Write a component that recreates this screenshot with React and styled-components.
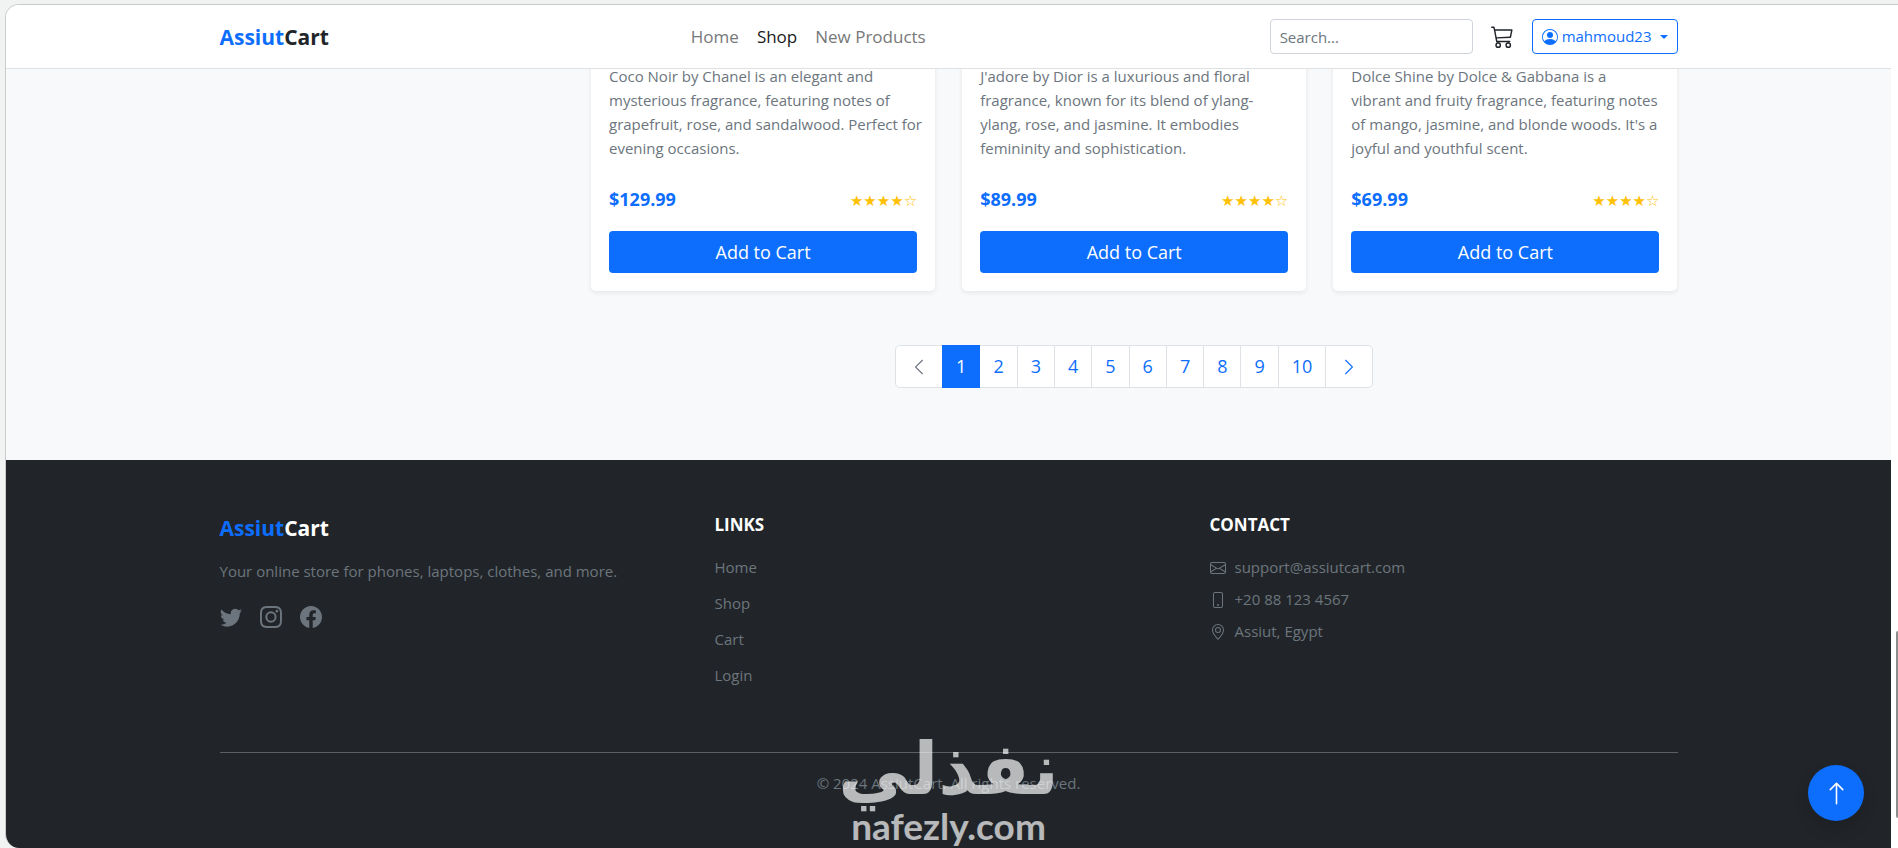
import styled, { createGlobalStyle, css } from "styled-components";
import { useState } from "react";
import {
  BsArrowUp,
  BsCart3,
  BsChevronLeft,
  BsChevronRight,
  BsEnvelope,
  BsFacebook,
  BsGeoAlt,
  BsInstagram,
  BsPersonCircle,
  BsPhone,
  BsTwitter,
} from "react-icons/bs";

const products = [
  {
    id: 1,
    text: "Coco Noir by Chanel is an elegant and mysterious fragrance, featuring notes of grapefruit, rose, and sandalwood. Perfect for evening occasions.",
    price: "$129.99",
    rating: 4,
  },
  {
    id: 2,
    text: "J'adore by Dior is a luxurious and floral fragrance, known for its blend of ylang-\nylang, rose, and jasmine. It embodies femininity and sophistication.",
    price: "$89.99",
    rating: 4,
  },
  {
    id: 3,
    text: "Dolce Shine by Dolce & Gabbana is a\nvibrant and fruity fragrance, featuring notes of mango, jasmine, and blonde woods. It's a joyful and youthful scent.",
    price: "$69.99",
    rating: 4,
  },
];

const pages = [1, 2, 3, 4, 5, 6, 7, 8, 9, 10];

const GlobalStyle = createGlobalStyle`
  * {
    box-sizing: border-box;
  }

  body {
    margin: 0;
    background-color: #f1f2f2;
    color: #212529;
    font-family: "Open Sans", "Noto Sans", sans-serif;
    font-size: 18px;
    line-height: 27px;
  }

  h2, h3, p, ul {
    margin: 0;
    padding: 0;
  }

  ul {
    list-style: none;
  }

  a {
    color: inherit;
    text-decoration: none;
  }

  button, input {
    font: inherit;
  }

  svg {
    display: block;
  }
`;

const Window = styled.div`
  display: flex;
  min-height: calc(100vh - 4px);
  margin: 4px 0 0 5px;
  border: solid #c8cacb;
  border-width: 1px 0 0 1px;
  border-radius: 14px 0 0 14px;
  background-color: #fff;
  overflow: hidden;
`;

const Page = styled.div`
  flex: 1;
  display: flex;
  flex-direction: column;
  background-color: #f8f9fa;
`;

const ScrollTrack = styled.div`
  display: flex;
  flex-direction: column;
  justify-content: flex-end;
  align-items: flex-end;
  width: 7px;
  padding-bottom: 30px;

  &::after {
    content: "";
    width: 2px;
    height: 187px;
    border-radius: 2px 0 0 2px;
    background-color: #8b8d8d;
  }
`;

const Container = styled.div`
  width: 100%;
  max-width: 1486px;
  margin: 0 auto;
  padding: 0 14px;
`;

const Header = styled.header`
  position: relative;
  z-index: 2;
  background-color: #fff;
  border-bottom: 1px solid #dee0e2;
`;

const NavRow = styled(Container)`
  display: flex;
  align-items: center;
  justify-content: space-between;
  height: 63px;
`;

const Brand = styled.a`
  margin-right: 18px;
  color: ${({ $light }) => ($light ? "#fff" : "#212529")};
  font-size: 21px;
  font-weight: 700;
  line-height: 28px;

  span {
    color: #0d6efd;
  }
`;

const NavLinks = styled.nav`
  display: flex;
`;

const NavLink = styled.a`
  padding: 0 9px;
  color: ${({ $active }) => ($active ? "#191a1b" : "#777879")};
  font-size: 17px;
`;

const NavActions = styled.div`
  display: flex;
  align-items: center;
  gap: 18px;
`;

const SearchInput = styled.input`
  width: 203px;
  height: 35px;
  padding: 0 9px;
  border: 1px solid #ced4da;
  border-radius: 4px;
  background-color: #fff;
  font-size: 15px;

  &::placeholder {
    color: #6c757d;
    opacity: 1;
  }
`;

const CartLink = styled.a`
  font-size: 23px;
`;

const UserButton = styled.button`
  display: flex;
  align-items: center;
  gap: 4px;
  height: 35px;
  padding: 0 9px;
  border: 1px solid #0d6efd;
  border-radius: 4px;
  background-color: transparent;
  color: #0d6efd;
  font-size: 15px;

  svg {
    font-size: 16px;
  }

  &::after {
    content: "";
    margin-left: 4px;
    border: solid transparent;
    border-width: 4px 4px 0;
    border-top-color: currentColor;
  }
`;

const Main = styled(Container)`
  display: flex;
  justify-content: flex-end;
  /* the list runs on under the nav bar */
  margin-top: -23px;
  padding-bottom: 72px;
`;

const Products = styled.section`
  width: calc(75% - 7px);
`;

const ProductGrid = styled.div`
  display: grid;
  grid-template-columns: repeat(3, 1fr);
  gap: 27px;
`;

const Card = styled.article`
  display: flex;
  flex-direction: column;
  padding: 18px;
  border-radius: 5px;
  background-color: #fff;
  box-shadow: 0 2px 5px rgba(0, 0, 0, 0.08);
`;

const CardText = styled.p`
  flex: 1;
  margin: 0 -8px 26px 0;
  color: #6c757d;
  font-size: 15px;
  line-height: 24px;
  white-space: pre-line;
`;

const CardRow = styled.div`
  display: flex;
  align-items: flex-end;
  justify-content: space-between;
  margin-bottom: 18px;
`;

const Price = styled.strong`
  color: #0d6efd;
`;

const Stars = styled.span`
  color: #ffc107;
  font-family: "DejaVu Sans", sans-serif;
  font-size: 15px;
  line-height: 24px;
`;

const AddButton = styled.button`
  height: 42px;
  border: 0;
  border-radius: 4px;
  background-color: #0d6efd;
  color: #fff;
`;

const Pagination = styled.nav`
  display: flex;
  justify-content: center;
  margin-top: 54px;
`;

const PageButton = styled.button`
  height: 43px;
  padding: 0 13px;
  border: 1px solid #dee2e6;
  background-color: #fff;
  color: #0d6efd;

  & + & {
    margin-left: -1px;
  }

  &:first-child {
    padding: 0 14px;
    border-radius: 5px 0 0 5px;
  }

  &:last-child {
    padding: 0 14px;
    border-radius: 0 5px 5px 0;
  }

  &:disabled {
    color: #6c757d;
  }

  ${({ $active }) =>
    $active &&
    css`
      position: relative;
      border-color: #0d6efd;
      background-color: #0d6efd;
      color: #fff;
    `}
`;

const Footer = styled.footer`
  position: relative;
  flex: 1;
  padding-top: 54px;
  background-color: #212529;
  color: #6c757d;
  font-size: 15px;
`;

const FooterColumns = styled.div`
  display: grid;
  grid-template-columns: repeat(3, 1fr);
  gap: 27px;
  padding-bottom: 63px;
`;

const FooterBrand = styled.div`
  p {
    margin: 14px 0 21px;
  }
`;

const Social = styled.div`
  display: flex;
  gap: 18px;
  font-size: 22px;
`;

const FooterTitle = styled.h3`
  margin-bottom: 18px;
  color: #fff;
  font-size: 17px;
  font-weight: 700;
  line-height: 22px;
`;

const FooterLinks = styled.ul`
  display: flex;
  flex-direction: column;
  gap: 9px;
`;

const ContactList = styled.ul`
  display: flex;
  flex-direction: column;
  gap: 5px;

  li {
    display: flex;
    align-items: center;
    gap: 9px;
  }

  svg {
    font-size: 16px;
  }
`;

const Copyright = styled.p`
  padding-top: 17px;
  border-top: 1px solid #5a6064;
  text-align: center;
`;

const Watermark = styled.div`
  position: absolute;
  bottom: 0;
  left: 50%;
  display: flex;
  flex-direction: column;
  align-items: center;
  transform: translateX(-50%);
  color: #fff;
  font-weight: 700;
  opacity: 0.68;
  pointer-events: none;
`;

const WatermarkArabic = styled.span`
  font-family: "DejaVu Sans", sans-serif;
  font-size: 72px;
  line-height: 70px;
`;

const WatermarkLatin = styled.span`
  font-family: Lato, sans-serif;
  font-size: 37px;
  line-height: 44px;
`;

const TopButton = styled.button`
  position: fixed;
  right: 34px;
  bottom: 27px;
  display: grid;
  place-items: center;
  width: 56px;
  height: 56px;
  border: 0;
  border-radius: 50%;
  background-color: #0d6efd;
  box-shadow: 0 8px 16px rgba(0, 0, 0, 0.15);
  color: #fff;
  font-size: 25px;
`;

const BrandName = ({ light }) => (
  <Brand href="#" $light={light}>
    <span>Assiut</span>Cart
  </Brand>
);

const ProductCard = ({ text, price, rating }) => (
  <Card>
    <CardText>{text}</CardText>
    <CardRow>
      <Price>{price}</Price>
      <Stars>{"★".repeat(rating) + "☆".repeat(5 - rating)}</Stars>
    </CardRow>
    <AddButton type="button">Add to Cart</AddButton>
  </Card>
);

const App = () => {
  const [search, setSearch] = useState("");
  const [page, setPage] = useState(1);

  return (
    <>
      <GlobalStyle />
      <Window>
        <Page>
          <Header>
            <NavRow>
              <BrandName />
              <NavLinks>
                <NavLink href="#">Home</NavLink>
                <NavLink href="#" $active>
                  Shop
                </NavLink>
                <NavLink href="#">New Products</NavLink>
              </NavLinks>
              <NavActions>
                <SearchInput
                  type="search"
                  aria-label="Search"
                  placeholder="Search..."
                  value={search}
                  onChange={({ target }) => setSearch(target.value)}
                />
                <CartLink href="#" aria-label="Cart">
                  <BsCart3 />
                </CartLink>
                <UserButton type="button">
                  <BsPersonCircle />
                  mahmoud23
                </UserButton>
              </NavActions>
            </NavRow>
          </Header>

          <Main as="main">
            <Products>
              <ProductGrid>
                {products.map((product) => (
                  <ProductCard key={product.id} {...product} />
                ))}
              </ProductGrid>

              <Pagination aria-label="Pages">
                <PageButton
                  aria-label="Previous"
                  disabled={page === 1}
                  onClick={() => setPage(page - 1)}
                >
                  <BsChevronLeft />
                </PageButton>
                {pages.map((number) => (
                  <PageButton
                    key={number}
                    $active={number === page}
                    onClick={() => setPage(number)}
                  >
                    {number}
                  </PageButton>
                ))}
                <PageButton
                  aria-label="Next"
                  disabled={page === pages.length}
                  onClick={() => setPage(page + 1)}
                >
                  <BsChevronRight />
                </PageButton>
              </Pagination>
            </Products>
          </Main>

          <Footer>
            <Container>
              <FooterColumns>
                <FooterBrand>
                  <BrandName light />
                  <p>Your online store for phones, laptops, clothes, and more.</p>
                  <Social>
                    <a href="#" aria-label="Twitter">
                      <BsTwitter />
                    </a>
                    <a href="#" aria-label="Instagram">
                      <BsInstagram />
                    </a>
                    <a href="#" aria-label="Facebook">
                      <BsFacebook />
                    </a>
                  </Social>
                </FooterBrand>

                <div>
                  <FooterTitle>LINKS</FooterTitle>
                  <FooterLinks>
                    {["Home", "Shop", "Cart", "Login"].map((name) => (
                      <li key={name}>
                        <a href="#">{name}</a>
                      </li>
                    ))}
                  </FooterLinks>
                </div>

                <div>
                  <FooterTitle>CONTACT</FooterTitle>
                  <ContactList>
                    <li>
                      <BsEnvelope />
                      support@assiutcart.com
                    </li>
                    <li>
                      <BsPhone />
                      +20 88 123 4567
                    </li>
                    <li>
                      <BsGeoAlt />
                      Assiut, Egypt
                    </li>
                  </ContactList>
                </div>
              </FooterColumns>
              <Copyright>© 2024 AssiutCart. All rights reserved.</Copyright>
            </Container>

            <Watermark>
              <WatermarkArabic lang="ar" dir="rtl">
                نفذلي
              </WatermarkArabic>
              <WatermarkLatin>nafezly.com</WatermarkLatin>
            </Watermark>
          </Footer>
        </Page>
        <ScrollTrack aria-hidden="true" />
      </Window>

      <TopButton
        type="button"
        aria-label="Back to top"
        onClick={() => window.scrollTo({ top: 0, behavior: "smooth" })}
      >
        <BsArrowUp />
      </TopButton>
    </>
  );
};

export default App;
